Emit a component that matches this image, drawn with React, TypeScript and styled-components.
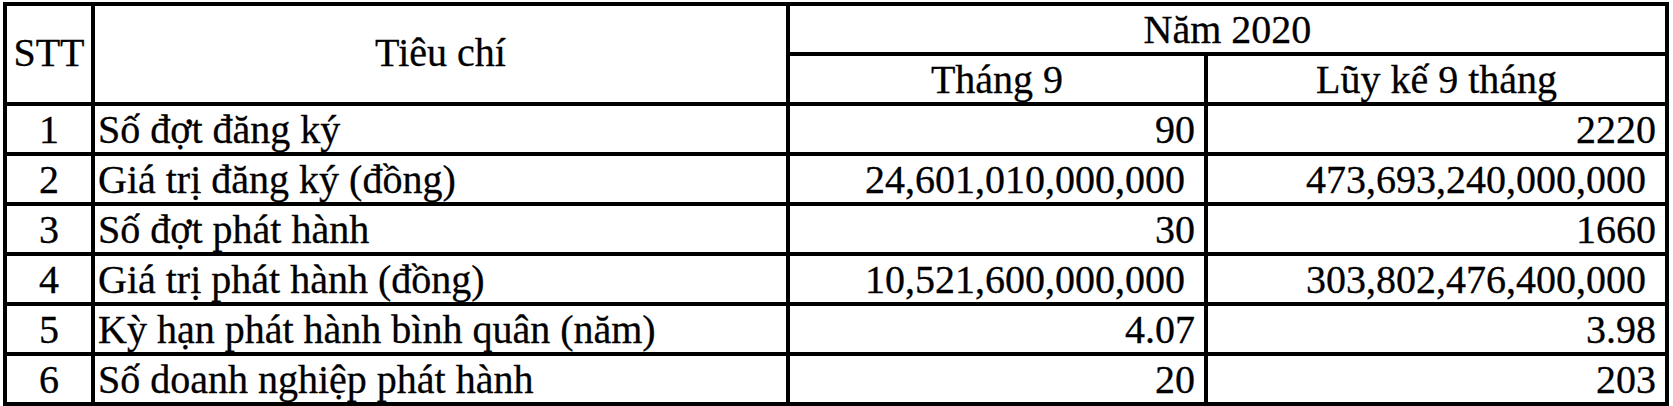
import React from 'react'
import styled, { createGlobalStyle } from 'styled-components'

const GlobalStyle = createGlobalStyle`
  html, body {
    margin: 0;
    padding: 0;
    background: #ffffff;
  }
  body {
    font-family: "Liberation Serif", "Times New Roman", serif;
    color: #000000;
  }
`

interface IRow {
  stt: string
  label: string
  month: string
  total: string
  formatted?: boolean
}

const rows: IRow[] = [
  { stt: '1', label: 'Số đợt đăng ký', month: '90', total: '2220' },
  {
    stt: '2',
    label: 'Giá trị đăng ký (đồng)',
    month: '24,601,010,000,000',
    total: '473,693,240,000,000',
    formatted: true
  },
  { stt: '3', label: 'Số đợt phát hành', month: '30', total: '1660' },
  {
    stt: '4',
    label: 'Giá trị phát hành (đồng)',
    month: '10,521,600,000,000',
    total: '303,802,476,400,000',
    formatted: true
  },
  { stt: '5', label: 'Kỳ hạn phát hành bình quân (năm)', month: '4.07', total: '3.98' },
  { stt: '6', label: 'Số doanh nghiệp phát hành', month: '20', total: '203' }
]

const App: React.FC = () => (
  <>
    <GlobalStyle />
    <Table>
      <HeadCell $span="row" $lift>STT</HeadCell>
      <HeadCell $span="row" $lift>Tiêu chí</HeadCell>
      <HeadCell $span="col">Năm 2020</HeadCell>
      <HeadCell>Tháng 9</HeadCell>
      <HeadCell>Lũy kế 9 tháng</HeadCell>

      {rows.map(row => (
        <React.Fragment key={row.stt}>
          <Cell $align="center">{row.stt}</Cell>
          <Cell $align="left">{row.label}</Cell>
          <Cell $align="right" $trail={row.formatted}>
            {row.month}
          </Cell>
          <Cell $align="right" $trail={row.formatted}>
            {row.total}
          </Cell>
        </React.Fragment>
      ))}
    </Table>
  </>
)

const Table = styled.div`
  display: grid;
  grid-template-columns: 84px 691px 414px 457px;
  grid-auto-rows: 46px;
  gap: 4px;
  padding: 4px;
  width: max-content;
  margin: 2px 0 0 3px;
  background: #000000;
`

const Cell = styled.div<{
  $align: 'left' | 'center' | 'right'
  $trail?: boolean
}>`
  background: #ffffff;
  font-size: 40px;
  line-height: 45px;
  -webkit-text-stroke: 0.3px #000000;
  padding-top: 1px;
  padding-left: ${({ $align }) => ($align === 'left' ? '3px' : '0')};
  padding-right: ${({ $align, $trail }) =>
    $align === 'right' ? ($trail ? '19px' : '9px') : '0'};
  text-align: ${({ $align }) => $align};
  white-space: nowrap;
  overflow: hidden;
`

const HeadCell = styled.div<{ $span?: 'row' | 'col'; $lift?: boolean }>`
  background: #ffffff;
  font-size: 40px;
  line-height: 45px;
  -webkit-text-stroke: 0.3px #000000;
  display: flex;
  align-items: ${({ $lift }) => ($lift ? 'center' : 'flex-start')};
  justify-content: center;
  padding-top: 1px;
  padding-bottom: ${({ $lift }) => ($lift ? '5px' : '0')};
  white-space: nowrap;
  grid-row: ${({ $span }) => ($span === 'row' ? 'span 2' : 'auto')};
  grid-column: ${({ $span }) => ($span === 'col' ? 'span 2' : 'auto')};
`

export default App
